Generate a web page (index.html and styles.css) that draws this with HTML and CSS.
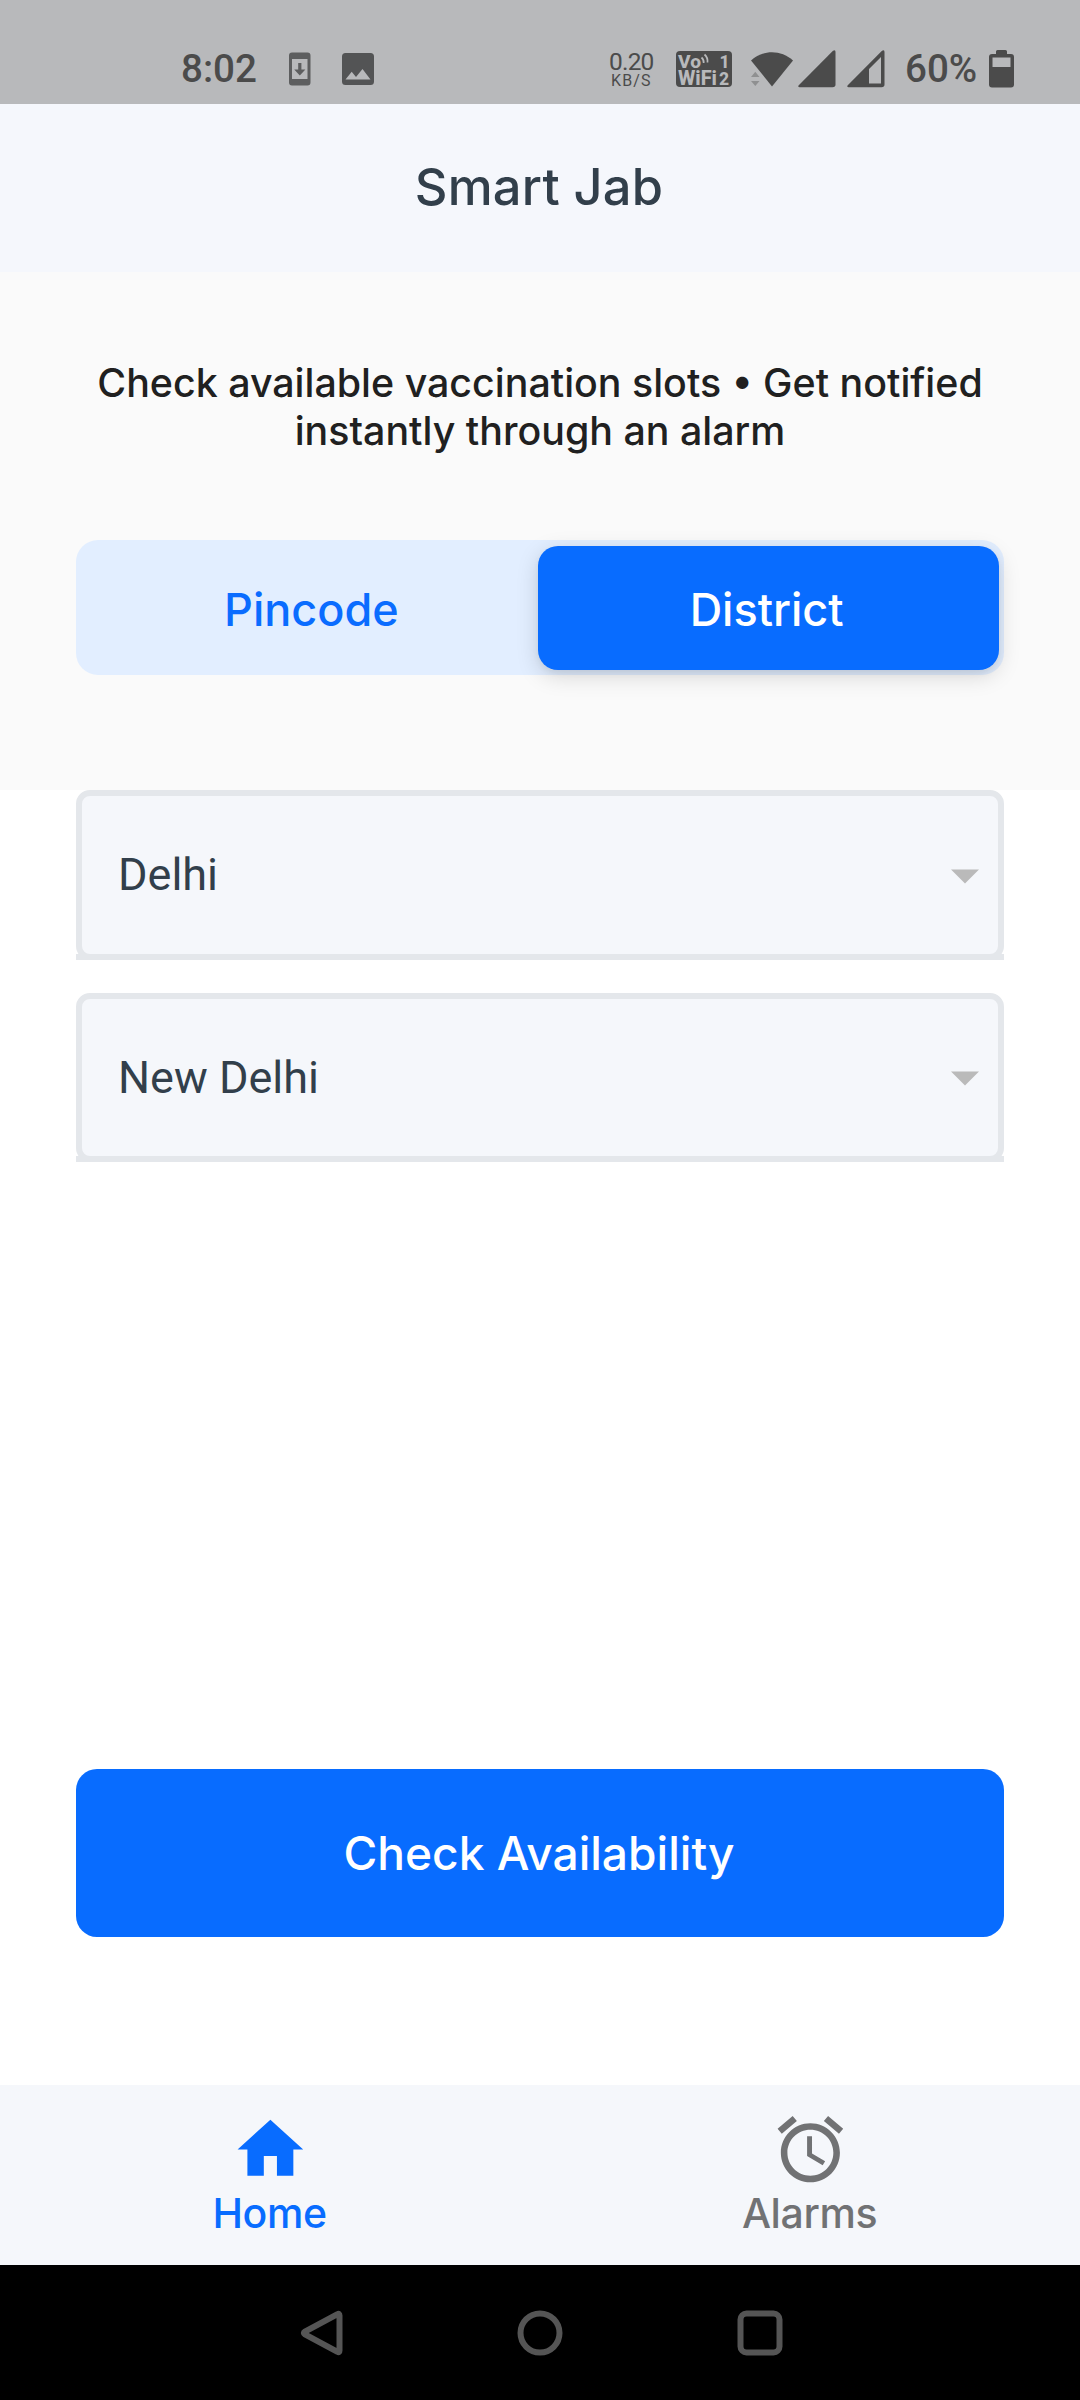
FILE: index.html
```html
<!DOCTYPE html>
<html lang="en">
<head>
<meta charset="utf-8">
<title>Smart Jab</title>
<link rel="stylesheet" href="styles.css">
</head>
<body>
<div class="screen">
  <div class="status">
    <span class="clock">8:02</span>
    <svg class="download" width="22" height="34" viewBox="0 0 22 34">
      <path fill="#5d5e5f" fill-rule="evenodd" d="M3 0.5h15.500a3 3 0 0 1 3 3v27a3 3 0 0 1-3 3h-15.500a3 3 0 0 1-3-3v-27a3 3 0 0 1 3-3zM3 7v20h15.500V7z"/>
      <path fill="#5d5e5f" d="M9.200 11h3.200v6.500h4L10.800 23.500 5.200 17.500h4z"/>
    </svg>
    <svg class="photo" width="32" height="32" viewBox="0 0 32 32">
      <path fill="#535455" fill-rule="evenodd" d="M3.500 0h25a3.500 3.500 0 0 1 3.500 3.500v25a3.500 3.500 0 0 1-3.500 3.500h-25A3.500 3.500 0 0 1 0 28.500v-25A3.500 3.500 0 0 1 3.500 0zM3.500 26.500h25L20.500 16 14 24 9.700 18.700z"/>
    </svg>
    <div class="speed"><span class="rate">0.20</span><span class="unit">KB/S</span></div>
    <svg class="vowifi" width="56" height="36" viewBox="0 0 56 36">
      <rect width="56" height="36" rx="4" fill="#4b4b4b"/>
      <g class="badge-text">
        <text x="2" y="16.500" font-size="19" textLength="23" lengthAdjust="spacingAndGlyphs">Vo</text>
        <text x="2" y="34" font-size="19.500" textLength="39" lengthAdjust="spacingAndGlyphs">WiFi</text>
        <text x="43.500" y="17" font-size="17.500">1</text>
        <text x="43" y="34" font-size="17.500">2</text>
      </g>
      <path d="M25.500 6.500q2.500 2 2.200 5.500M28.500 3.500q3.500 3 3 8" fill="none" stroke="#b8b9bb" stroke-width="1.700"/>
    </svg>
    <svg class="signals" width="134" height="38" viewBox="751 50 134 38">
      <path fill="#4b4b4b" d="M751 60.500C763 49.500 781 49.500 793 60.500L772 86.500z"/>
      <path fill="#8f9091" d="M751 77h8.500L755.300 71.800zM751 81h8.500L755.300 86z"/>
      <path fill="#4b4b4b" d="M798.500 85.500L833 50.800Q835.500 49 835.500 52V84.500Q835.500 87.300 832.500 87.300H799.500Q797.500 87 798.500 85.500z"/>
      <path fill="#4b4b4b" fill-rule="evenodd" d="M847.500 85.500L882 50.800Q884.500 49 884.500 52V84.500Q884.500 87.300 881.500 87.300H848.500Q846.500 87 847.500 85.500zM869 69V83.500H881V57z"/>
    </svg>
    <span class="percent">60%</span>
    <svg class="battery" width="25" height="38" viewBox="0 0 25 38">
      <path fill="#4b4b4b" fill-rule="evenodd" d="M8.500 0h8q1.500 0 1.500 1.500V4h4q3 0 3 3v27.500q0 3-3 3H3q-3 0-3-3V7q0-3 3-3h4V1.500Q7 0 8.500 0zM3.500 7.500v9.500h18V7.500z"/>
    </svg>
  </div>

  <header class="appbar"><h1>Smart Jab</h1></header>

  <section class="intro">
    <p class="tagline">Check available vaccination slots • Get notified<br>instantly through an alarm</p>
    <div class="tabs">
      <div class="tab">Pincode</div>
      <div class="tab active">District</div>
    </div>
  </section>

  <main class="form">
    <div class="field"><span>Delhi</span>
      <svg class="caret" width="28" height="15" viewBox="0 0 28 15"><path d="M0 0.500h28L14 14.500z" fill="#bababa"/></svg>
    </div>
    <div class="field"><span>New Delhi</span>
      <svg class="caret" width="28" height="15" viewBox="0 0 28 15"><path d="M0 0.500h28L14 14.500z" fill="#bababa"/></svg>
    </div>
    <div class="submit">Check Availability</div>
  </main>

  <nav class="bottom">
    <div class="item selected">
      <svg class="nav-icon" viewBox="0 0 24 24"><path fill="currentColor" d="M10 20v-6h4v6h5v-8h3L12 3 2 12h3v8z"/></svg>
      <span>Home</span>
    </div>
    <div class="item">
      <svg class="nav-icon" viewBox="0 0 24 24"><path fill="currentColor" d="M22 5.720l-4.600-3.860-1.290 1.530 4.600 3.860L22 5.720zM7.880 3.390L6.600 1.860 2 5.710l1.290 1.530 4.590-3.850zM12.500 8H11v6l4.750 2.850.75-1.230-4-2.370V8zM12 4c-4.970 0-9 4.030-9 9s4.020 9 9 9c4.970 0 9-4.030 9-9s-4.030-9-9-9zm0 16c-3.870 0-7-3.130-7-7s3.130-7 7-7 7 3.130 7 7-3.130 7-7 7z"/></svg>
      <span>Alarms</span>
    </div>
  </nav>

  <div class="system">
    <svg width="46" height="48" viewBox="0 0 46 48"><path d="M42.500 6.500V41.500q0 2.500-2 1.300L8 25.500q-2.300-1.500 0-3L40.500 5.200q2-1.200 2 1.300z"/></svg>
    <svg width="46" height="48" viewBox="0 0 46 48"><circle cx="23" cy="24" r="19.500"/></svg>
    <svg width="46" height="48" viewBox="0 0 46 48"><rect x="3.500" y="4.500" width="39" height="39" rx="6"/></svg>
  </div>
</div>
</body>
</html>
```
FILE: styles.css
```css
* { box-sizing: border-box; }
body { margin: 0; background: #fff; font-family: Inter, sans-serif; }
svg { display: block; flex: none; overflow: visible; }

.screen { width: 1080px; height: 2400px; display: flex; flex-direction: column; overflow: hidden; }
.screen > * { flex: none; }

/* Android status bar */
.status {
  height: 104px; padding: 34px 66px 0 181px; background: #b8b9bb; color: #4b4b4b;
  display: flex; align-items: center; font-family: Roboto, sans-serif; white-space: nowrap;
}
.clock, .percent { font-size: 38.6px; font-weight: 500; line-height: 46px; }
.clock { width: 108px; }
.download { margin-right: 31px; }
.photo { margin-right: 235px; }
.speed { width: 67px; display: flex; flex-direction: column; }
.rate { font-size: 24.5px; line-height: 23px; letter-spacing: -0.8px; font-weight: 400; }
.unit { font-size: 16px; line-height: 16px; letter-spacing: 1.1px; padding-left: 2px; font-weight: 400; }
.vowifi { margin-right: 19px; }
.badge-text { fill: #b8b9bb; font-family: Roboto, sans-serif; font-weight: 800; }
.signals { margin-right: 20px; }
.percent { width: 84px; }

.appbar {
  height: 168px; padding: 0 2px 2px 0; background: #f5f7fc;
  display: flex; align-items: center; justify-content: center;
}
.appbar h1 { margin: 0; font-size: 50.6px; font-weight: 500; line-height: 60px; letter-spacing: 0.2px; color: #323f4b; }

.intro { height: 518px; padding: 86.500px 76px 0; background: #fafafa; }
.tagline {
  margin: 0; height: 181px; text-align: center; white-space: nowrap;
  font-size: 39.375px; font-weight: 500; line-height: 48px; letter-spacing: 0; color: #202020;
}
.tabs { height: 135px; padding: 6px 5.500px 5px 1px; display: flex; background: #e2eeff; border-radius: 22px; }
.tab {
  width: 50%; display: flex; align-items: center; justify-content: center; padding: 4px 0 0 8px;
  border-radius: 20px; font-size: 45px; font-weight: 500; color: #0a6cff;
}
.tab.active { padding: 4px 3px 0 0; background: #086cff; color: #fff; box-shadow: 0 6px 22px rgba(0, 0, 0, .15), 0 3px 6px rgba(0, 0, 0, .05); }

.form { height: 1295px; padding: 0 76px; background: #fff; }
.field {
  height: 169.500px; margin-bottom: 33px; padding: 0 19px 0 36px;
  display: flex; align-items: center; justify-content: space-between;
  position: relative; background: #f5f7fb; border: 6px solid #e4e7eb; border-radius: 14px;
  font-family: Roboto, sans-serif; font-size: 45px; color: #323f4b;
}
/* square-ended underline below the rounded frame */
.field::after { content: ""; position: absolute; left: -6px; right: -6px; bottom: -6px; height: 6px; background: #e4e7eb; }
.caret { margin-top: 3px; }
.submit {
  height: 168.700px; margin-top: 606.600px; padding-right: 2px; border-radius: 21px; background: #086cff; color: #fff;
  display: flex; align-items: center; justify-content: center; font-size: 46.100px; font-weight: 500;
}

.bottom { height: 180px; padding-top: 25px; background: #f5f7fb; display: flex; }
.item {
  flex: 1; display: flex; flex-direction: column; align-items: center;
  color: #717274; font-size: 41px; font-weight: 500; line-height: 48px; letter-spacing: -0.4px;
}
.item span { padding-right: 1px; }
.item.selected { color: #086cff; }
.nav-icon { width: 78.750px; height: 78.750px; }

.system { height: 135px; background: #000; display: flex; justify-content: center; align-items: center; gap: 174px; }
.system svg { fill: none; stroke: #555; stroke-width: 6; }
```
